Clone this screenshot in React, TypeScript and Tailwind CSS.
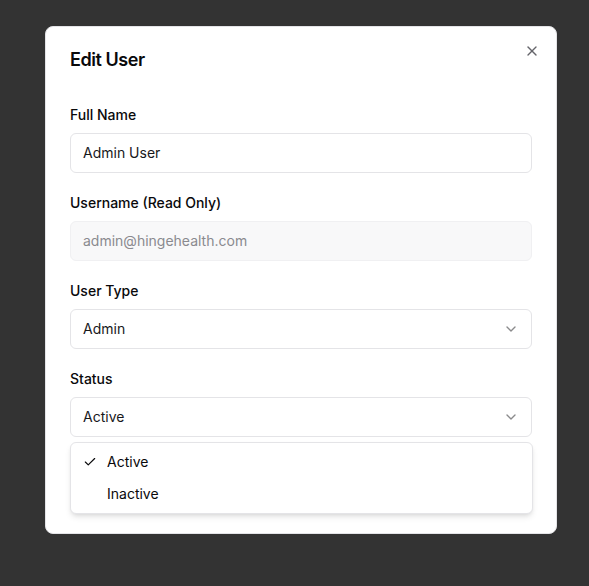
import { Check, ChevronDown, X } from 'lucide-react'

const inputClass =
  'flex h-10 w-full items-center rounded-md border border-[#e4e4e7] bg-white px-3 text-sm text-[#18181b]'

export default function App() {
  return (
    <div
      className="min-h-[586px] w-full bg-[#333333] pt-[26px] pl-[45px]"
      style={{ fontFamily: 'Inter, "Noto Sans", sans-serif' }}
    >
      <div className="relative w-[512px] rounded-lg border border-[#e4e4e7] bg-white p-6 text-[#09090b]">
        {/* Close */}
        <button className="absolute right-4 top-4 text-[#3f3f46] opacity-80">
          <X className="h-4 w-4" strokeWidth={2} />
        </button>

        <h2 className="text-lg font-semibold leading-none tracking-tight">Edit User</h2>

        <div className="mt-9 flex flex-col gap-5">
          <div className="flex flex-col gap-2">
            <label className="text-sm font-medium leading-5">Full Name</label>
            <div className={inputClass}>Admin User</div>
          </div>

          <div className="flex flex-col gap-2">
            <label className="text-sm font-medium leading-5">Username (Read Only)</label>
            <div className="flex h-10 w-full items-center rounded-md border border-[#f0f0f2] bg-[#f8f8f9] px-3 text-sm text-[#8a8a8f]">
              admin@hingehealth.com
            </div>
          </div>

          <div className="flex flex-col gap-2">
            <label className="text-sm font-medium leading-5">User Type</label>
            <div className={inputClass + ' justify-between'}>
              <span>Admin</span>
              <ChevronDown className="h-4 w-4 opacity-50" />
            </div>
          </div>

          <div className="flex flex-col gap-2">
            <label className="text-sm font-medium leading-5">Status</label>
            <div className="relative">
              <div className={inputClass + ' justify-between'}>
                <span>Active</span>
                <ChevronDown className="h-4 w-4 opacity-50" />
              </div>

              {/* Open select menu */}
              <div className="absolute left-0 right-[-1px] top-[calc(100%+5px)] z-10 rounded-md border border-[#e4e4e7] bg-white px-1 py-[3px] text-sm text-[#09090b] shadow-md">
                <div className="relative flex h-8 items-center rounded-sm pl-8 pr-2">
                  <span className="absolute left-2 flex h-3.5 w-3.5 items-center justify-center">
                    <Check className="h-4 w-4" strokeWidth={2} />
                  </span>
                  Active
                </div>
                <div className="relative flex h-8 items-center rounded-sm pl-8 pr-2">Inactive</div>
              </div>
            </div>
          </div>
        </div>

        <div className="h-[72px]" />
      </div>
    </div>
  )
}
